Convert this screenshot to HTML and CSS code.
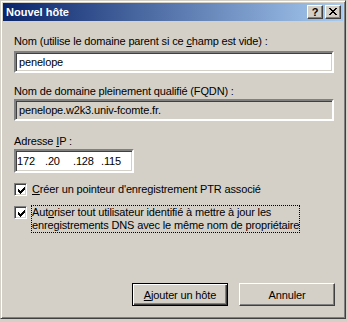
FILE: index.html
```html
<!DOCTYPE html>
<html lang="fr">
<head>
  <meta charset="UTF-8" />
  <title>Nouvel hôte</title>
  <link rel="stylesheet" href="styles.css">
</head>
<body>
  <div class="window">
    <!-- Title bar -->
    <div class="titlebar">
      <span class="title">Nouvel hôte</span>
      <div class="caption-btn help">?</div>
      <div class="caption-btn close">
        <svg width="8" height="7" viewBox="0 0 8 7" shape-rendering="crispEdges">
          <path d="M0 0h2v1h-2zM6 0h2v1h-2zM1 1h2v1h-2zM5 1h2v1h-2zM2 2h4v1h-4zM3 3h2v1h-2zM2 4h4v1h-4zM1 5h2v1h-2zM5 5h2v1h-2zM0 6h2v1h-2zM6 6h2v1h-2z" fill="#000"/>
        </svg>
      </div>
    </div>

    <div class="content">
      <div class="label first">Nom (utilise le domaine parent si ce <u>c</u>hamp est vide) :</div>
      <div class="field">penelope</div>

      <div class="label">Nom de domaine pleinement qualifié (FQDN) :</div>
      <div class="field disabled">penelope.w2k3.univ-fcomte.fr.</div>

      <div class="label ip-label">Adresse <u>I</u>P :</div>
      <div class="field ip">
        <span class="octet">172</span><span class="octet">.20</span><span class="octet">.128</span><span class="octet">.115</span>
      </div>

      <div class="check-row first">
        <div class="checkbox">
          <svg width="7" height="7" viewBox="0 0 7 7" shape-rendering="crispEdges">
            <path d="M0 2h1v3h-1zM1 3h1v3h-1zM2 4h1v3h-1zM3 3h1v3h-1zM4 2h1v3h-1zM5 1h1v3h-1zM6 0h1v3h-1z" fill="#000"/>
          </svg>
        </div>
        <div class="check-label"><u>C</u>réer un pointeur d'enregistrement PTR associé</div>
      </div>

      <div class="check-row">
        <div class="checkbox">
          <svg width="7" height="7" viewBox="0 0 7 7" shape-rendering="crispEdges">
            <path d="M0 2h1v3h-1zM1 3h1v3h-1zM2 4h1v3h-1zM3 3h1v3h-1zM4 2h1v3h-1zM5 1h1v3h-1zM6 0h1v3h-1z" fill="#000"/>
          </svg>
        </div>
        <div class="check-label focused">Aut<u>o</u>riser tout utilisateur identifié à mettre à jour les<br>enregistrements DNS avec le même nom de propriétaire</div>
      </div>

      <div class="buttons">
        <div class="btn default"><span><u>A</u>jouter un hôte</span></div>
        <div class="btn"><span>Annuler</span></div>
      </div>
    </div>
  </div>
</body>
</html>
```

FILE: styles.css
```css
body {
  margin: 0;
  padding: 0;
  background-color: #d4d0c8;
  font-family: "Liberation Sans", Arial, sans-serif;
  font-size: 11px;
  letter-spacing: -0.15px;
  color: #000;
}

.window {
  width: 346px;
  height: 319px;
  box-sizing: border-box;
  border: 1px solid;
  border-color: #d4d0c8 #404040 #404040 #d4d0c8;
  padding: 2px;
  box-shadow: inset 1px 1px #ffffff, inset -1px -1px #808080;
  background-color: #d4d0c8;
  display: flex;
  flex-direction: column;
}

.titlebar {
  height: 18px;
  display: flex;
  align-items: center;
  padding: 0 2px 0 2px;
  background: linear-gradient(to right, #0a246a, #a6caf0);
}

.title {
  flex: 1;
  color: #ffffff;
  font-weight: bold;
  font-size: 11px;
  letter-spacing: 0;
  padding-left: 1px;
}

.caption-btn {
  width: 16px;
  height: 14px;
  box-sizing: border-box;
  background-color: #d4d0c8;
  border: 1px solid;
  border-color: #ffffff #404040 #404040 #ffffff;
  box-shadow: inset -1px -1px #808080;
  display: flex;
  align-items: center;
  justify-content: center;
  font-weight: bold;
  font-size: 11px;
  line-height: 12px;
}

.caption-btn.help {
  margin-right: 2px;
  padding-bottom: 1px;
}

.caption-btn.close svg {
  display: block;
  margin-top: -1px;
}

.content {
  flex: 1;
  display: flex;
  flex-direction: column;
  padding: 0 8px 0 11px;
}

.label {
  line-height: 13px;
  margin-top: 12px;
  margin-bottom: 1px;
}

.label.first {
  margin-top: 14px;
  margin-bottom: 3px;
}

.label.ip-label {
  margin-top: 14px;
}

.field {
  height: 22px;
  box-sizing: border-box;
  margin-right: 1px;
  border: 2px solid;
  border-color: #808080 #ffffff #ffffff #808080;
  box-shadow: inset 1px 1px #404040, inset -1px -1px #d4d0c8;
  background-color: #ffffff;
  padding: 0 3px;
  line-height: 18px;
}

.field.disabled {
  background-color: #d4d0c8;
}

.field.ip {
  width: 120px;
  height: 24px;
  line-height: 20px;
  padding: 0 1px;
}

.octet {
  display: inline-block;
  width: 28px;
}

.check-row {
  display: flex;
  align-items: flex-start;
  margin-top: 9px;
}

.check-row.first {
  margin-top: 10px;
}

.checkbox {
  width: 13px;
  height: 13px;
  box-sizing: border-box;
  border: 1px solid;
  border-color: #808080 #ffffff #ffffff #808080;
  box-shadow: inset 1px 1px #404040, inset -1px -1px #d4d0c8;
  background-color: #ffffff;
  padding: 2px;
  margin-right: 4px;
}

.checkbox svg {
  display: block;
  margin: 1px 0 0 1px;
}

.check-label {
  line-height: 13px;
  border: 1px dotted transparent;
  margin-top: -1px;
}

.check-label.focused {
  border-color: #000000;
}

.buttons {
  margin-top: auto;
  margin-bottom: 10px;
  display: flex;
  justify-content: flex-end;
  gap: 11px;
}

.btn {
  width: 96px;
  height: 23px;
  box-sizing: border-box;
  border: 1px solid;
  border-color: #ffffff #404040 #404040 #ffffff;
  box-shadow: inset -1px -1px #808080;
  display: flex;
  align-items: center;
  justify-content: center;
}

.btn.default {
  border-color: #000000;
  box-shadow: inset 1px 1px #ffffff, inset -1px -1px #404040, inset -2px -2px #808080;
}
```
